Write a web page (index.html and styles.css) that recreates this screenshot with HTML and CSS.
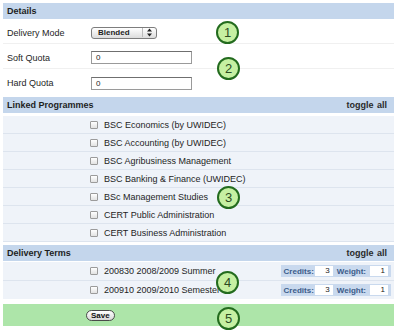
FILE: index.html
```html
<!DOCTYPE html>
<html lang="en">
<head>
  <meta charset="UTF-8">
  <title>Delivery settings</title>
  <link rel="stylesheet" href="styles.css">
</head>
<body>
  <div class="form">
    <div class="section">
      <div class="section-head"><span>Details</span></div>
      <div class="field-row">
        <label>Delivery Mode</label>
        <div class="select">
          <span>Blended</span>
          <svg class="arrows" width="7" height="9" viewBox="0 0 7 9"><path d="M3.5 0.5 L6 3.5 L1 3.5 Z M3.5 8.5 L6 5.5 L1 5.5 Z" fill="#222"/></svg>
        </div>
      </div>
      <div class="field-row">
        <label>Soft Quota</label>
        <div class="text-input">0</div>
      </div>
      <div class="field-row last">
        <label>Hard Quota</label>
        <div class="text-input">0</div>
      </div>
    </div>

    <div class="section">
      <div class="section-head"><span>Linked Programmes</span><a class="toggle">toggle all</a></div>
      <ul class="check-list">
        <li><span class="cb"></span>BSC Economics (by UWIDEC)</li>
        <li><span class="cb"></span>BSC Accounting (by UWIDEC)</li>
        <li><span class="cb"></span>BSC Agribusiness Management</li>
        <li><span class="cb"></span>BSC Banking &amp; Finance (UWIDEC)</li>
        <li><span class="cb"></span>BSc Management Studies</li>
        <li><span class="cb"></span>CERT Public Administration</li>
        <li><span class="cb"></span>CERT Business Administration</li>
      </ul>
    </div>

    <div class="section">
      <div class="section-head"><span>Delivery Terms</span><a class="toggle">toggle all</a></div>
      <ul class="check-list terms">
        <li>
          <span class="cb"></span><span class="term-name">200830 2008/2009 Summer</span>
          <span class="weights"><b class="credits">Credits:</b><span class="num">3</span><b class="weight">Weight:</b><span class="num">1</span></span>
        </li>
        <li>
          <span class="cb"></span><span class="term-name">200910 2009/2010 Semester 1</span>
          <span class="weights"><b class="credits">Credits:</b><span class="num">3</span><b class="weight">Weight:</b><span class="num">1</span></span>
        </li>
      </ul>
    </div>

    <div class="actions">
      <button>Save</button>
    </div>
  </div>

  <span class="marker m1">1</span>
  <span class="marker m2">2</span>
  <span class="marker m3">3</span>
  <span class="marker m4">4</span>
  <span class="marker m5">5</span>
</body>
</html>
```

FILE: styles.css
```css
body {
  margin: 0;
  padding: 3px 0 0 3px;
  font-family: "Liberation Sans", Arial, sans-serif;
  font-size: 9px;
  color: #1e1e1e;
  background: #fff;
}
.form {
  width: 391px;
}
.section {
  margin-bottom: 3px;
}
.section-head {
  display: flex;
  justify-content: space-between;
  align-items: center;
  height: 16px;
  padding: 0 7px 0 4px;
  background-color: #c4d6ec;
  font-weight: bold;
}
.toggle {
  color: #2a2a2a;
  word-spacing: 1px;
}
.field-row {
  display: flex;
  align-items: center;
  box-sizing: border-box;
  height: 25px;
  padding: 3px 0 0 4px;
  border-bottom: 1px solid #f0f0f0;
}
.field-row.last {
  border-bottom: none;
}
.field-row label {
  width: 84px;
}
.select {
  display: flex;
  align-items: center;
  justify-content: space-between;
  box-sizing: border-box;
  width: 66px;
  height: 12px;
  padding: 0 3px 0 6px;
  border: 1px solid #7d7d7d;
  border-radius: 3px;
  background: linear-gradient(#ffffff, #dcdcdc);
  font-size: 8px;
  font-weight: bold;
}
.arrows {
  border-left: 1px solid #bbb;
  padding-left: 3px;
}
.text-input {
  box-sizing: border-box;
  width: 101px;
  height: 13px;
  line-height: 11px;
  padding-left: 4px;
  border: 1px solid #9a9a9a;
  border-top-color: #6f6f6f;
  font-size: 8px;
}
.check-list {
  list-style: none;
  margin: 0;
  padding: 3px 0 0;
}
.check-list li {
  display: flex;
  align-items: center;
  height: 17px;
  padding-left: 87px;
  background-color: #eff3f9;
  border-bottom: 1px solid #dde4ee;
}
.terms {
  padding-top: 1px;
}
.terms li {
  height: 18px;
  padding-right: 3px;
}
.terms li:last-child {
  border-bottom-color: #fff;
}
.cb {
  box-sizing: border-box;
  width: 8px;
  height: 8px;
  margin-right: 6px;
  border: 1px solid #9b9b9b;
  border-radius: 1px;
  background: linear-gradient(#ffffff, #e2e2e2);
}
.term-name {
  flex: 1;
}
.weights {
  display: flex;
  align-items: center;
  height: 12px;
  padding: 0 3px;
  background-color: #c9d9ee;
  color: #3c5c8a;
  font-size: 8px;
}
.credits {
  margin-right: 1px;
}
.weight {
  margin: 0 4px;
}
.num {
  box-sizing: border-box;
  width: 18px;
  height: 10px;
  line-height: 10px;
  padding-right: 3px;
  text-align: right;
  background: #fff;
  color: #222;
}
.actions {
  display: flex;
  align-items: center;
  margin-top: 4px;
  height: 22px;
  padding-left: 83px;
  background-color: #ade5a9;
}
.actions button {
  height: 11px;
  padding: 0 4px;
  border: 1px solid #4a4a4a;
  border-radius: 6px;
  background: linear-gradient(#ffffff, #d8d8d8);
  font-family: "Liberation Sans", Arial, sans-serif;
  font-size: 8px;
  font-weight: bold;
  line-height: 9px;
  color: #111;
}
.marker {
  position: absolute;
  box-sizing: border-box;
  width: 23px;
  height: 23px;
  border: 2px solid #236b1e;
  border-radius: 50%;
  background-color: #c6f0a2;
  color: #2c4a22;
  font-size: 13px;
  line-height: 19px;
  text-align: center;
}
.m1 { left: 216px; top: 21px; }
.m2 { left: 217px; top: 57px; }
.m3 { left: 217px; top: 186px; }
.m4 { left: 216px; top: 271px; }
.m5 { left: 217px; top: 307px; }
```
